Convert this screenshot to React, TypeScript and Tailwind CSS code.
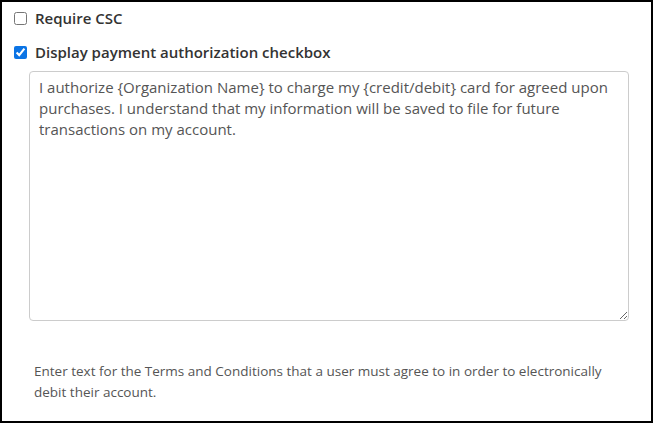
import React, { useState } from 'react';

const App: React.FC = () => {
  const [requireCsc, setRequireCsc] = useState(false);
  const [showAuth, setShowAuth] = useState(true);
  const [terms, setTerms] = useState(
    'I authorize {Organization Name} to charge my {credit/debit} card for agreed upon purchases. I understand that my information will be saved to file for future transactions on my account.'
  );

  return (
    <div
      className="w-[653px] h-[423px] border-2 border-black bg-white text-[#333] text-[15px]"
      style={{ fontFamily: '"Open Sans", "Liberation Sans", sans-serif' }}
    >
      <div className="pl-[12px] pt-[6px]">
        {/* Require CSC */}
        <label className="flex items-center gap-[8px] h-[20px] cursor-pointer">
          <input
            type="checkbox"
            checked={requireCsc}
            onChange={(e) => setRequireCsc(e.target.checked)}
            className="w-[13px] h-[13px] m-0 accent-[#0b74e5]"
          />
          <span className="font-semibold">Require CSC</span>
        </label>

        {/* Payment authorization */}
        <label className="flex items-center gap-[8px] h-[20px] mt-[14px] cursor-pointer">
          <input
            type="checkbox"
            checked={showAuth}
            onChange={(e) => setShowAuth(e.target.checked)}
            className="w-[13px] h-[13px] m-0 accent-[#0b74e5]"
          />
          <span className="font-semibold">Display payment authorization checkbox</span>
        </label>
      </div>

      <div className="pl-[27px] pt-[9px]">
        <textarea
          value={terms}
          onChange={(e) => setTerms(e.target.value)}
          className="block w-[600px] h-[250px] border border-[#ccc] rounded-[4px] px-[9px] py-[5px] leading-[21px] text-[#555] text-[15px] outline-none"
          style={{ fontFamily: '"Open Sans", "Liberation Sans", sans-serif' }}
        />
        <p className="pl-[5px] pt-[40px] text-[#555] text-[13.5px] leading-[21px] w-[600px]">
          Enter text for the Terms and Conditions that a user must agree to in order to electronically debit their account.
        </p>
      </div>
    </div>
  );
};

export default App;
